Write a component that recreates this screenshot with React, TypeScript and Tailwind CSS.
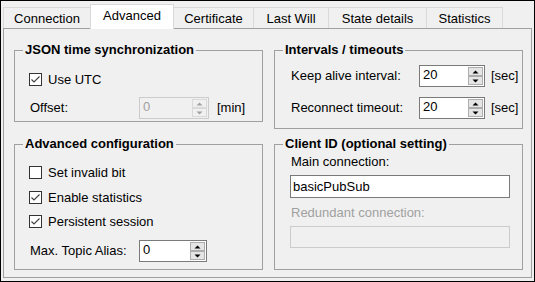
import React from 'react';

const tabs = [
  { label: 'Connection', w: 'w-[88px]' },
  { label: 'Advanced', w: 'w-[84px]', active: true },
  { label: 'Certificate', w: 'w-[81px]' },
  { label: 'Last Will', w: 'w-[76px]' },
  { label: 'State details', w: 'w-[99px]' },
  { label: 'Statistics', w: 'w-[77px]' },
];

const Arrow: React.FC<{ up?: boolean; disabled?: boolean }> = ({ up, disabled }) => (
  <div
    className={`flex flex-1 items-center justify-center border ${
      disabled ? 'border-[#d9d9d9] bg-[#f0f0f0]' : 'border-[#adadad] bg-[#e5e5e5]'
    }`}
  >
    <svg width="7" height="4" viewBox="0 0 7 4">
      <polygon
        points={up ? '0.5,3.5 6.5,3.5 3.5,0.5' : '0.5,0.5 6.5,0.5 3.5,3.5'}
        fill={disabled ? '#a0a0a0' : '#000'}
      />
    </svg>
  </div>
);

const Spinner: React.FC<{ value: string; width: string; disabled?: boolean }> = ({
  value,
  width,
  disabled,
}) => (
  <div
    className={`flex h-[22px] shrink-0 border p-px ${width} ${
      disabled ? 'border-[#cccccc] bg-[#f0f0f0] text-[#a0a0a0]' : 'border-[#7a7a7a] bg-white text-black'
    }`}
  >
    <span className="flex-1 pl-[2px] leading-[16px]">{value}</span>
    <div className="flex w-[15px] flex-col">
      <Arrow up disabled={disabled} />
      <Arrow disabled={disabled} />
    </div>
  </div>
);

const Check: React.FC<{ label: string; checked?: boolean; className?: string }> = ({
  label,
  checked,
  className = '',
}) => (
  <div className={`flex h-[17px] items-center ${className}`}>
    <div className="flex h-[13px] w-[13px] items-center justify-center border border-[#333333] bg-white">
      {checked && (
        <svg width="11" height="11" viewBox="0 0 11 11">
          <polyline points="1.5,5.5 4,8 9.5,2.5" fill="none" stroke="#444" strokeWidth="1.2" />
        </svg>
      )}
    </div>
    <span className="ml-[6px]">{label}</span>
  </div>
);

const Group: React.FC<{ title: string; h: string; children: React.ReactNode }> = ({
  title,
  h,
  children,
}) => (
  <fieldset className={`m-0 border border-[#a0a0a0] p-0 ${h}`}>
    <legend className="ml-[8px] px-[2px] text-[13px] font-bold leading-[16px]">{title}</legend>
    {children}
  </fieldset>
);

export default function App() {
  return (
    <div className="h-[282px] w-[535px] overflow-hidden border border-black bg-[#f0f0f0] font-['Liberation_Sans',Arial,sans-serif] text-[13px] leading-[16px] text-black">
      {/* tab strip */}
      <div className="flex h-[27px] items-end pl-[2px]">
        {tabs.map((t, i) =>
          t.active ? (
            <div
              key={t.label}
              className={`relative z-10 -mb-px flex h-[25px] items-center justify-center border border-b-0 border-[#d9d9d9] bg-white pb-[2px] ${t.w} ${
                i > 0 ? '-ml-px' : ''
              }`}
            >
              {t.label}
            </div>
          ) : (
            <div
              key={t.label}
              className={`flex h-[21px] items-center justify-center border border-b-0 border-[#d9d9d9] bg-[#f0f0f0] pt-px ${t.w} ${
                i > 0 ? '-ml-px' : ''
              }`}
            >
              {t.label}
            </div>
          )
        )}
      </div>

      {/* tab page */}
      <div className="ml-[2px] h-[250px] w-[529px] border border-[#a0a0a0] bg-[#f0f0f0]">
        <div className="grid grid-cols-[249px_249px] items-start gap-x-[11px] gap-y-[7px] pl-[10px] pt-[13px]">
          <Group title="JSON time synchronization" h="h-[80px]">
            <div className="pl-[14px]">
              <Check label="Use UTC" checked className="mt-[13px]" />
              <div className="mt-[9px] flex items-center">
                <span className="w-[110px] pl-px">Offset:</span>
                <Spinner value="0" width="w-[70px]" disabled />
                <span className="ml-[8px]">[min]</span>
              </div>
            </div>
          </Group>

          <Group title="Intervals / timeouts" h="h-[87px]">
            <div className="pl-[15px]">
              <div className="mt-[7px] flex items-center">
                <span className="w-[129px] pl-px">Keep alive interval:</span>
                <Spinner value="20" width="w-[66px]" />
                <span className="ml-[6px]">[sec]</span>
              </div>
              <div className="mt-[10px] flex items-center">
                <span className="w-[129px] pl-px">Reconnect timeout:</span>
                <Spinner value="20" width="w-[66px]" />
                <span className="ml-[6px]">[sec]</span>
              </div>
            </div>
          </Group>

          <Group title="Advanced configuration" h="h-[134px]">
            <div className="pl-[14px]">
              <Check label="Set invalid bit" className="mt-[12px]" />
              <Check label="Enable statistics" checked className="mt-[8px]" />
              <Check label="Persistent session" checked className="mt-[7px]" />
              <div className="mt-[10px] flex items-center">
                <span className="w-[110px] pl-px">Max. Topic Alias:</span>
                <Spinner value="0" width="w-[68px]" />
              </div>
            </div>
          </Group>

          <Group title="Client ID (optional setting)" h="h-[134px]">
            <div className="pl-[15px]">
              <div className="mt-[2px] pl-px">Main connection:</div>
              <div className="mt-[5px] flex h-[23px] w-[220px] items-center border border-[#7a7a7a] bg-white pl-[2px]">
                basicPubSub
              </div>
              <div className="mt-[7px] pl-px text-[#a0a0a0]">Redundant connection:</div>
              <div className="mt-[5px] h-[22px] w-[220px] border border-[#cccccc] bg-[#f0f0f0]" />
            </div>
          </Group>
        </div>
      </div>
    </div>
  );
}
